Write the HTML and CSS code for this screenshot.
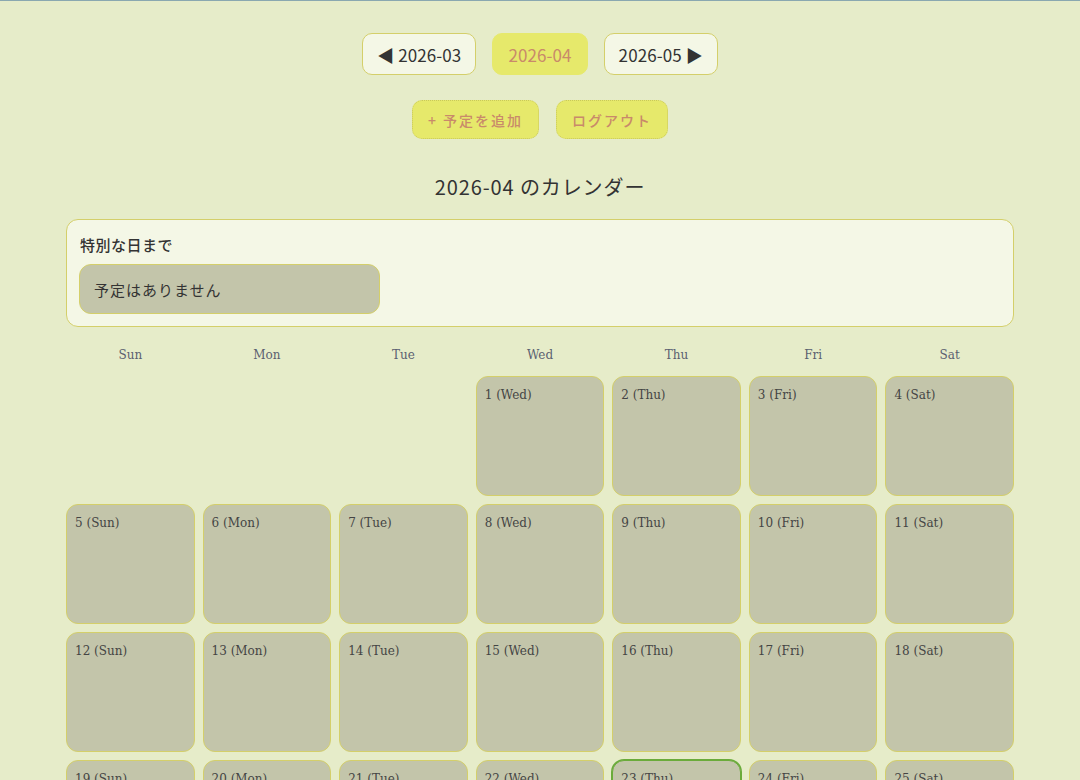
FILE: index.html
```html
<!DOCTYPE html>
<html lang="ja">
<head>
    <meta charset="UTF-8">
    <meta name="viewport" content="width=device-width, initial-scale=1.0">
    <title>カレンダー</title>
    <link rel="stylesheet" href="styles.css">
</head>
<body>
    <div class="page">
        <nav class="month-nav">
            <a class="month-btn" href="#">◀ 2026-03</a>
            <span class="month-btn current">2026-04</span>
            <a class="month-btn" href="#">2026-05 ▶</a>
        </nav>

        <div class="actions">
            <button class="action-btn">+ 予定を追加</button>
            <button class="action-btn">ログアウト</button>
        </div>

        <h1 class="title">2026-04 のカレンダー</h1>

        <section class="countdown-card">
            <div class="countdown-label">特別な日まで</div>
            <div class="countdown-empty">予定はありません</div>
        </section>

        <div class="week-header">
            <div>Sun</div>
            <div>Mon</div>
            <div>Tue</div>
            <div>Wed</div>
            <div>Thu</div>
            <div>Fri</div>
            <div>Sat</div>
        </div>

        <div class="calendar" id="calendar"></div>
    </div>

    <script>
        const names = ['Sun', 'Mon', 'Tue', 'Wed', 'Thu', 'Fri', 'Sat'];
        const cal = document.getElementById('calendar');
        const first = new Date(2026, 3, 1).getDay();
        const today = 23;

        for (let i = 0; i < first; i++) {
            const blank = document.createElement('div');
            blank.className = 'day blank';
            cal.appendChild(blank);
        }

        for (let d = 1; d <= 30; d++) {
            const cell = document.createElement('div');
            cell.className = 'day' + (d === today ? ' today' : '');
            const label = document.createElement('div');
            label.className = 'day-label';
            label.textContent = d + ' (' + names[(first + d - 1) % 7] + ')';
            cell.appendChild(label);
            cal.appendChild(cell);
        }
    </script>
</body>
</html>
```

FILE: styles.css
```css
* {
    margin: 0;
    padding: 0;
    box-sizing: border-box;
}

body {
    background: #e6ecc9;
    border-top: 1px solid #8aa8b0;
    color: #333;
    font-family: "Noto Sans CJK JP", "Noto Sans", sans-serif;
}

.page {
    width: 948px;
    margin: 0 auto;
    padding-top: 32px;
    padding-bottom: 40px;
}

.month-nav {
    display: flex;
    justify-content: center;
    gap: 16px;
}

.month-btn {
    display: flex;
    align-items: center;
    height: 42px;
    padding: 0 14px;
    background: #f4f7e6;
    border: 1px solid #d4cf6a;
    border-radius: 10px;
    color: #333;
    font-size: 17px;
    letter-spacing: 0.1px;
    text-decoration: none;
}

.month-btn.current {
    padding: 0 15px;
    background: #e6e96b;
    border-color: #e6e96b;
    color: #c98a6a;
}

.actions {
    display: flex;
    justify-content: center;
    gap: 17px;
    margin-top: 25px;
}

.action-btn {
    height: 39px;
    padding: 0 15px;
    background: #e6e96b;
    border: 1px dotted #c9c85a;
    border-radius: 10px;
    color: #c98a6a;
    font-family: inherit;
    font-size: 14px;
    font-weight: 500;
    letter-spacing: 2px;
}

.title {
    margin-top: 34px;
    text-align: center;
    font-size: 20px;
    font-weight: 400;
    line-height: 28px;
    color: #333;
    letter-spacing: 0.9px;
}

.countdown-card {
    margin-top: 18px;
    padding: 14px 12px 12px;
    background: #f4f7e6;
    border: 1px solid #d4cf6a;
    border-radius: 12px;
}

.countdown-label {
    font-size: 15px;
    font-weight: 500;
    line-height: 22px;
    padding-left: 1px;
    margin-bottom: 8px;
    letter-spacing: 0.5px;
}

.countdown-empty {
    width: 301px;
    height: 50px;
    display: flex;
    align-items: center;
    padding: 0 14px;
    background: #c3c5aa;
    border: 1px solid #d4cf6a;
    border-radius: 12px;
    font-size: 15px;
    letter-spacing: 1px;
}

.week-header {
    display: grid;
    grid-template-columns: repeat(7, 1fr);
    gap: 8px;
    margin-top: 18px;
    margin-bottom: 11px;
    text-align: center;
    font-family: "DejaVu Serif", serif;
    font-size: 12px;
    line-height: 20px;
    color: #5a6070;
}

.calendar {
    display: grid;
    grid-template-columns: repeat(7, 1fr);
    gap: 8px;
}

.day {
    height: 120px;
    padding: 9px 8px 8px;
    background: #c3c5aa;
    border: 1px solid #d4cf6a;
    border-radius: 12px;
}

.day.blank {
    background: none;
    border: none;
}

.day.today {
    border-color: #6aab3a;
    box-shadow: 0 0 0 1px #6aab3a;
}

.day-label {
    font-family: "DejaVu Serif", serif;
    font-size: 12px;
    line-height: 18px;
    color: #444;
}
```
